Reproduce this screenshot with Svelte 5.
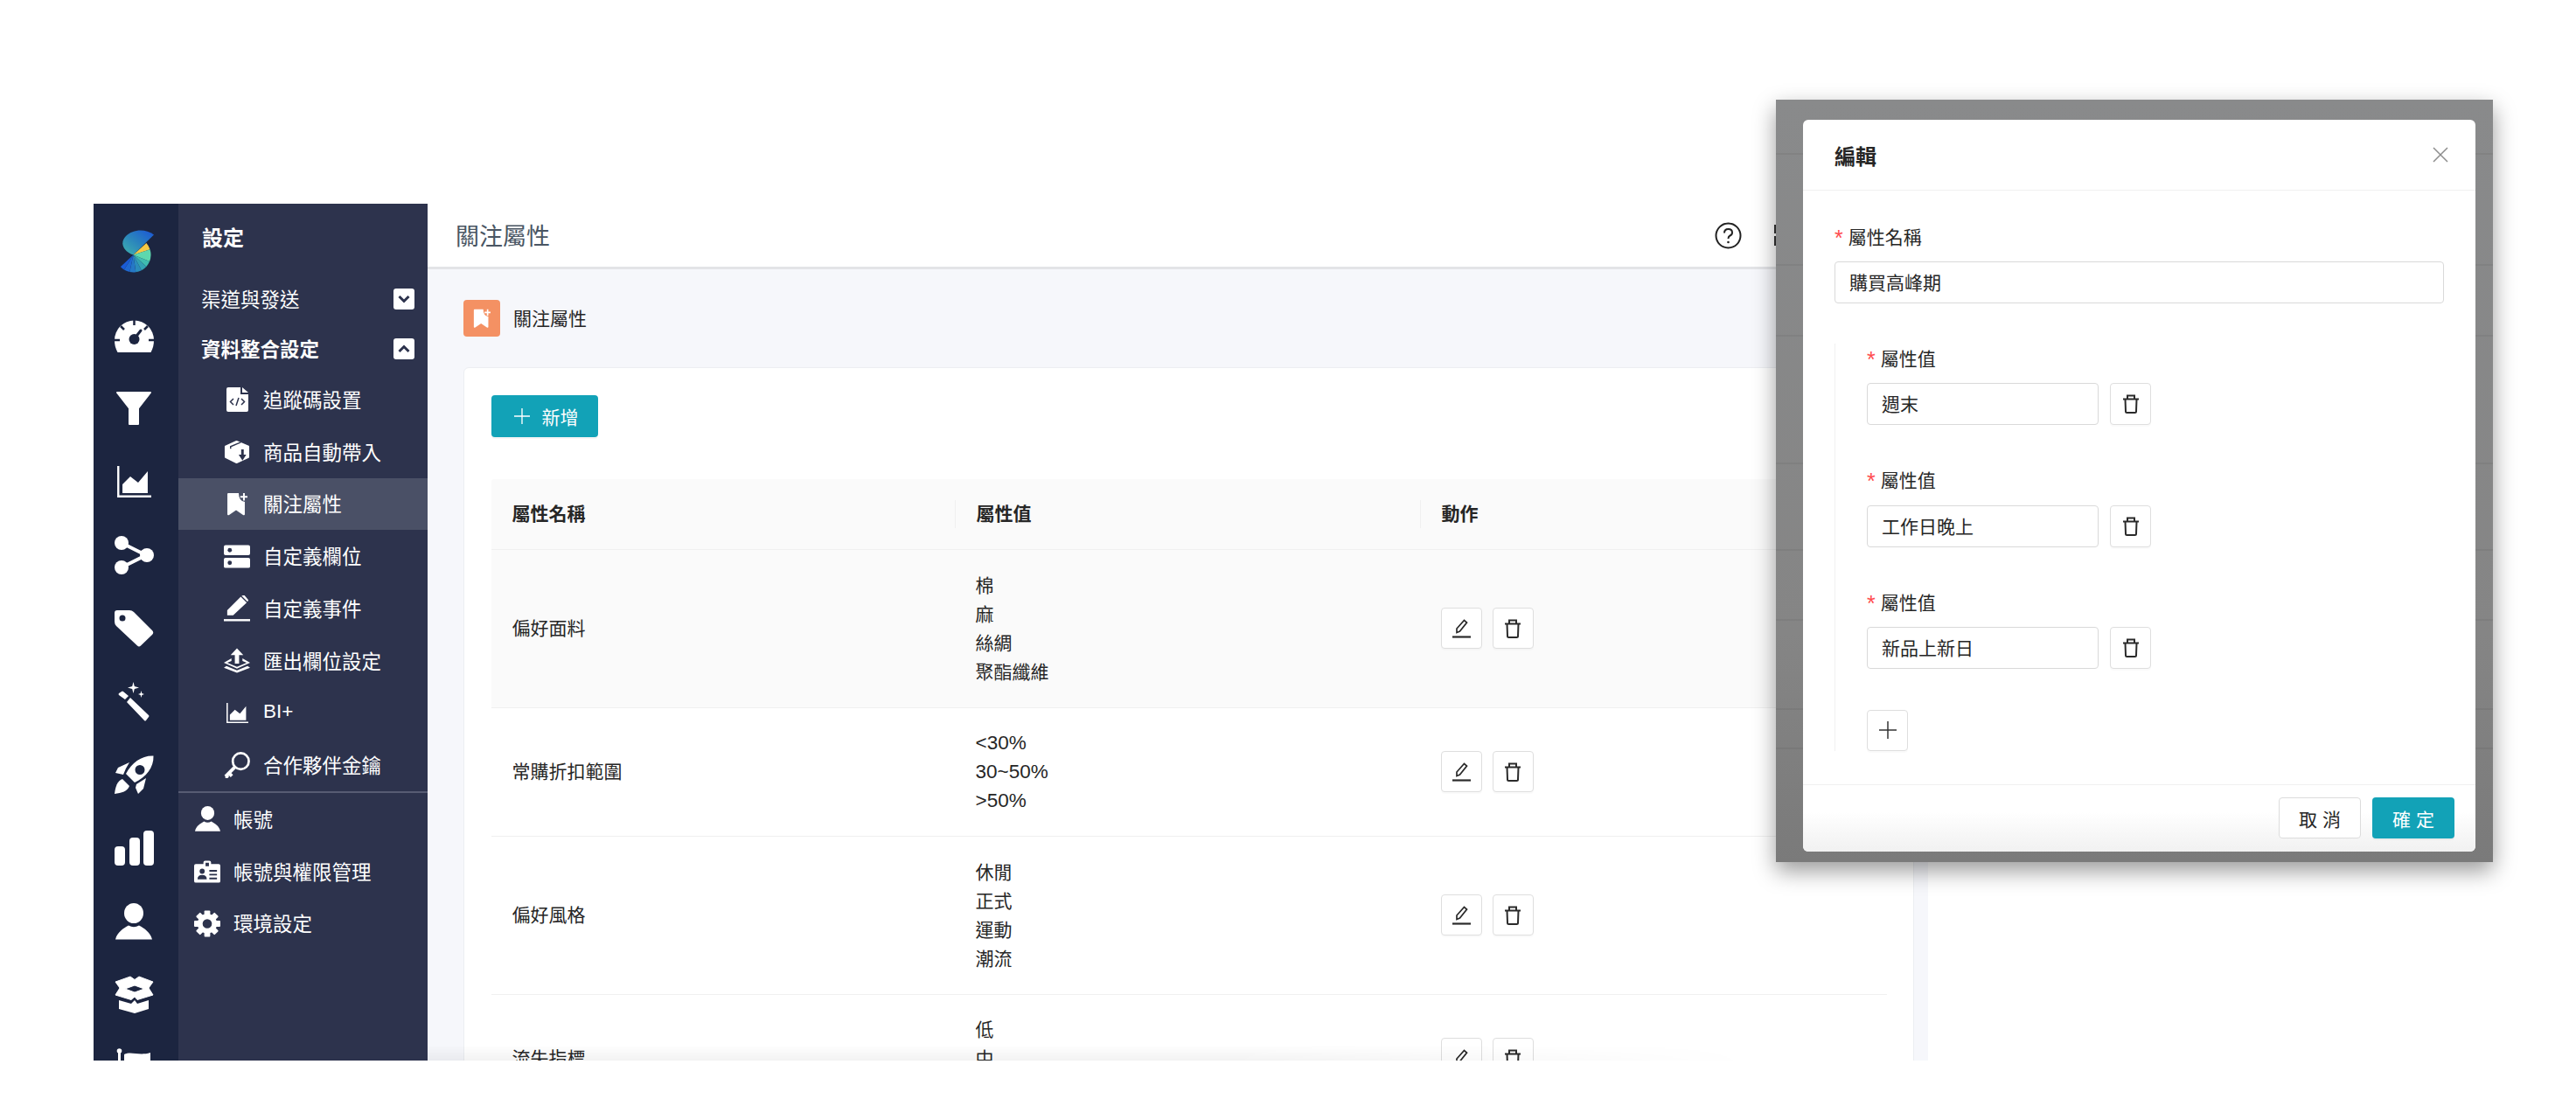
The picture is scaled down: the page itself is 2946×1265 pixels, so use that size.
<script>
  // fan wedges of the logo, angles in degrees around the fan centre
  const fan = [
    { from: -42, to: -18, color: '#f6c945' },
    { from: -18, to: 22, color: '#5dd8ae' },
    { from: 22, to: 42, color: '#3fbcb0' },
    { from: 42, to: 62, color: '#33a2b4' },
    { from: 62, to: 82, color: '#2b8cbc' },
    { from: 82, to: 102, color: '#2578c6' },
    { from: 102, to: 122, color: '#1f68d0' },
    { from: 122, to: 137, color: '#1a5bd6' }
  ];

  function wedge(w) {
    const r = 20;
    const a = (w.from * Math.PI) / 180;
    const b = (w.to * Math.PI) / 180;
    const p = (t) => `${(14.5 + r * Math.cos(t)).toFixed(2)} ${(28.5 + r * Math.sin(t)).toFixed(2)}`;
    return `M14.5 28.5L${p(a)}A${r} ${r} 0 0 1 ${p(b)}Z`;
  }

  const gearTeeth = [0, 45, 90, 135, 180, 225, 270, 315];

  const railIcons = [gauge, funnel, areaChart, share, tag, wand, rocket, bars, person, openBox, flag];

  const subItems = [
    { label: '追蹤碼設置', icon: codeFile },
    { label: '商品自動帶入', icon: boxImport },
    { label: '關注屬性', icon: bookmarkPlus, active: true },
    { label: '自定義欄位', icon: server },
    { label: '自定義事件', icon: pencil },
    { label: '匯出欄位設定', icon: exportLayers },
    { label: 'BI+', icon: areaChart },
    { label: '合作夥伴金鑰', icon: key }
  ];

  const topItems = [
    { label: '帳號', icon: person },
    { label: '帳號與權限管理', icon: idCard },
    { label: '環境設定', icon: gear }
  ];

  const rows = [
    { name: '偏好面料', values: ['棉', '麻', '絲綢', '聚酯纖維'], hover: true },
    { name: '常購折扣範圍', values: ['<30%', '30~50%', '>50%'], latin: true },
    { name: '偏好風格', values: ['休閒', '正式', '運動', '潮流'] },
    { name: '流失指標', values: ['低', '中', '高'] }
  ];

  const modalValues = ['週末', '工作日晚上', '新品上新日'];

  // rows of the page behind the dimmed layer, y inside the layer
  const dimLines = [61, 188, 269, 415, 514, 594, 696, 741];
</script>

{#snippet gauge()}
  <svg class="gauge" width="45" height="37" viewBox="0 0 45 37">
    <path fill="#fff" d="M3.500 37C1 32.500 0 28 0 23A22.500 22.500 0 0 1 45 23C45 28 44 32.500 41.500 37Z" />
    <path stroke="#1c2540" stroke-width="2.500" d="M22.500 0V6M7 7L11 11M38 7L34 11M0 23H6M39 23H45" />
    <circle cx="22.500" cy="22" r="6" fill="#1c2540" />
    <path stroke="#1c2540" stroke-width="3" stroke-linecap="round" d="M23 21L30 12" />
  </svg>
{/snippet}

{#snippet funnel()}
  <svg width="40" height="38" viewBox="0 0 40 38">
    <path fill="#fff" stroke="#fff" stroke-width="2" stroke-linejoin="round" d="M1 1H39L25 19V37H15V19Z" />
  </svg>
{/snippet}

{#snippet areaChart(size = 39)}
  <svg width={size} height={size * 0.92} viewBox="0 0 39 36">
    <path fill="none" stroke="#fff" stroke-width="2.400" d="M1.200 0V34.800H39" />
    <path fill="#fff" d="M6 31V21L15 12L24 19L35 6V31Z" />
  </svg>
{/snippet}

{#snippet share()}
  <svg width="45" height="44" viewBox="0 0 45 44">
    <path stroke="#fff" stroke-width="4" d="M8 8L36 22L8 36" fill="none" />
    <circle cx="8" cy="8" r="8" fill="#fff" />
    <circle cx="37" cy="22" r="8" fill="#fff" />
    <circle cx="8" cy="36" r="8" fill="#fff" />
  </svg>
{/snippet}

{#snippet tag()}
  <svg width="45" height="42" viewBox="0 0 45 42">
    <path fill="#fff" fill-rule="evenodd" d="M3 0H17Q20 0 22 2L43 23Q45.500 25.500 43 28L30 40.500Q28 42.500 26 40.500L2 18Q0 16 0 13V3Q0 0 3 0ZM9 5.500A3.500 3.500 0 1 0 9 12.500A3.500 3.500 0 1 0 9 5.500Z" />
  </svg>
{/snippet}

{#snippet wand()}
  <svg width="36" height="45" viewBox="0 0 36 45">
    <path fill="#fff" d="M6 11L12 16L8 20L1 15Q0 14 1 13L4 11Q5 10 6 11Z" />
    <path fill="#fff" d="M14 18L35 38Q36 39 35 40L32 44Q31 45 30 44L10 23Z" />
    <path fill="#fff" d="M17.500 0L18.800 5L24 6.500L18.800 8L17.500 13L16.200 8L11 6.500L16.200 5Z" />
    <path fill="#fff" d="M26.500 10L27.300 13L30 14L27.300 15L26.500 18L25.700 15L23 14L25.700 13Z" />
  </svg>
{/snippet}

{#snippet rocket()}
  <svg width="45" height="44" viewBox="0 0 45 44">
    <path fill="#fff" fill-rule="evenodd" d="M44.500 0.500C31 0 20 8 13 21L23 31C36 25 45 14 44.500 0.500ZM29 11A5.500 5.500 0 1 0 29 22A5.500 5.500 0 1 0 29 11Z" />
    <path fill="#fff" d="M16 8L3 14L0 20L9 22Q12 14 16 8Z" transform="translate(1 0)" />
    <path fill="#fff" d="M36 26L25 33L24 37L27 44L33 38Z" />
    <path fill="#fff" d="M9 27C3 29 1 36 0 44C8 43 15 41 17 35Z" />
  </svg>
{/snippet}

{#snippet bars()}
  <svg width="45" height="40" viewBox="0 0 45 40">
    <rect x="0" y="18" width="12" height="22" rx="4" fill="#fff" />
    <rect x="17" y="8" width="12" height="32" rx="4" fill="#fff" />
    <rect x="33" y="0" width="12" height="40" rx="4" fill="#fff" />
  </svg>
{/snippet}

{#snippet person(size = 42)}
  <svg width={size} height={size} viewBox="0 0 42 42">
    <ellipse cx="21" cy="11.500" rx="11" ry="11.500" fill="#fff" />
    <path fill="#fff" d="M0 41.500C2 33 9 29 15 25.500Q21 29 27 25.500C33 29 40 33 42 41.500Z" />
  </svg>
{/snippet}

{#snippet openBox()}
  <svg width="45" height="43" viewBox="0 0 45 43">
    <path fill="#fff" stroke="#fff" stroke-linejoin="round" fill-rule="evenodd" d="M1 7L18 1L23 4.500L28 1L44 7L39 14L44 22L26 27.500L23 24L19 27.500L1 22L6 14ZM12 15L23 19L34 15L23 11Z" />
    <path fill="#fff" d="M5 28L19 32L23 28L26 32L39 28V38L23 43L5 38Z" />
  </svg>
{/snippet}

{#snippet flag()}
  <svg width="40" height="46" viewBox="0 0 40 46">
    <circle cx="3.500" cy="3" r="2.800" fill="#fff" />
    <rect x="2" y="3" width="3" height="43" fill="#fff" />
    <path fill="#fff" d="M9 7C17 3 26 9 39 5V36H9Z" />
  </svg>
{/snippet}

{#snippet codeFile()}
  <svg width="25" height="28" viewBox="0 0 25 28">
    <path fill="#fff" d="M2 0H16V8H25V26Q25 28 23 28H2Q0 28 0 26V2Q0 0 2 0ZM18 0L25 6H18Z" />
    <path fill="none" stroke="#2d334d" stroke-width="1.500" d="M8 13L4.500 16.500L8 20M17 13L20.500 16.500L17 20M14 12L11 21" />
  </svg>
{/snippet}

{#snippet boxImport()}
  <svg width="31" height="28" viewBox="0 0 31 28">
    <path fill="#fff" stroke="#fff" stroke-width="2" stroke-linejoin="round" d="M2 7.500L15 1.500L29 7.500V20L15 26.500L2 20Z" />
    <path fill="none" stroke="#2d334d" stroke-width="1.500" d="M8 10V7.500L20 2.500" />
    <path fill="#2d334d" d="M20.500 11H23.500V17H26.500L22 24L17.500 17H20.500Z" />
  </svg>
{/snippet}

{#snippet bookmarkPlus(size = 24, ink = '#fff')}
  <svg width={size} height={size * 1.12} viewBox="0 0 24 27">
    <path fill={ink} d="M2 1H14Q14 10 21 11V25Q21 27 19 26L11 20.500L3 26Q1 27 1 25V2Q1 1 2 1Z" />
    <path stroke={ink} stroke-width="2" d="M20 1V9.500M15.800 5.200H24" />
  </svg>
{/snippet}

{#snippet server()}
  <svg width="31" height="27" viewBox="0 0 31 27">
    <rect y="0" width="31" height="12" rx="2" fill="#fff" />
    <rect y="15" width="31" height="12" rx="2" fill="#fff" />
    <circle cx="7" cy="6" r="2.500" fill="#2d334d" />
    <circle cx="7" cy="21" r="2.500" fill="#2d334d" />
  </svg>
{/snippet}

{#snippet pencil()}
  <svg width="31" height="30" viewBox="0 0 31 30">
    <path fill="#fff" d="M4 23V17L20 1L27 8L11 23ZM21 0L24 -1L29 5L28 7Z" />
    <rect x="0" y="27.500" width="31" height="2.500" fill="#fff" />
  </svg>
{/snippet}

{#snippet exportLayers()}
  <svg width="31" height="29" viewBox="0 0 31 29">
    <path fill="#fff" d="M15.500 0L23 8H18V18H13V8H8Z" />
    <path fill="#fff" d="M9 12V15L4 17L15.500 22L27 17L22 15V12L31 17L15.500 24L0 17Z" />
    <path fill="#fff" d="M3 21L15.500 26L28 21L31 23L15.500 29L0 23Z" />
  </svg>
{/snippet}

{#snippet key()}
  <svg width="31" height="30" viewBox="0 0 31 30">
    <circle cx="20" cy="10.500" r="9.500" fill="none" stroke="#fff" stroke-width="2.800" />
    <path stroke="#fff" stroke-width="4" d="M13.500 17L2 28.500M6 24.500L9.500 28M2.500 28L5 30" fill="none" />
  </svg>
{/snippet}

{#snippet idCard()}
  <svg width="31" height="26" viewBox="0 0 31 26">
    <path fill="#fff" fill-rule="evenodd" d="M2 4H11V2Q11 0 13 0H18Q20 0 20 2V4H29Q31 4 31 6V24Q31 26 29 26H2Q0 26 0 24V6Q0 4 2 4ZM13.500 2.500V6.500H17.500V2.500Z" />
    <circle cx="9.500" cy="12.500" r="3" fill="#2d334d" />
    <path fill="#2d334d" d="M4 22Q4 17 9.500 17Q15 17 15 22Z" />
    <path stroke="#2d334d" stroke-width="2" d="M18 12H27M18 16.500H27M18 21H27" />
  </svg>
{/snippet}

{#snippet gear()}
  <svg width="31" height="31" viewBox="0 0 31 31">
    {#each gearTeeth as a}
      <rect x="12" y="0" width="7" height="8" rx="1" fill="#fff" transform="rotate({a} 15.500 15.500)" />
    {/each}
    <circle cx="15.500" cy="15.500" r="8.500" fill="none" stroke="#fff" stroke-width="6" />
  </svg>
{/snippet}

{#snippet trash()}
  <svg width="20" height="22" viewBox="0 0 20 22" fill="none" stroke="#2a2a2a" stroke-width="2">
    <path d="M1 5.500H19M6 5.500V1.500H14V5.500M3.500 5.500L4 19.500Q4 21 5.500 21H14.500Q16 21 16 19.500L16.500 5.500" />
  </svg>
{/snippet}

{#snippet edit()}
  <svg width="21" height="22" viewBox="0 0 21 22" fill="none" stroke="#2a2a2a" stroke-width="1.700">
    <path d="M5 15.500V11L13.500 1.500L16.500 4L8.500 14Z" />
    <path stroke-width="2.200" d="M0 20.500H21" />
  </svg>
{/snippet}

{#snippet plus(ink = '#333', size = 20)}
  <svg width={size} height={size} viewBox="0 0 20 20" stroke={ink} stroke-width="1.500">
    <path d="M10 0V20M0 10H20" />
  </svg>
{/snippet}

<div class="page">
  <div class="app">
    <nav class="rail">
      <div class="logo">
        <svg width="39" height="49" viewBox="0 0 39 49">
          <defs>
            <linearGradient id="logoTop" x1="0" y1="1" x2="1" y2="0">
              <stop offset="0" stop-color="#3fb3ad" />
              <stop offset="0.5" stop-color="#2a83bd" />
              <stop offset="1" stop-color="#1a55d8" />
            </linearGradient>
          </defs>
          <path fill="url(#logoTop)" d="M14.500 28.500C2 24 -1 14 6 7C14 -1 28 -2 38 5.500Z" />
          {#each fan as w}
            <path d={wedge(w)} fill={w.color} />
          {/each}
        </svg>
      </div>
      {#each railIcons as icon}
        <div class="rail-item">{@render icon()}</div>
      {/each}
    </nav>

    <aside class="menu">
      <div class="menu-title">設定</div>
      <div class="group-row">
        <span>渠道與發送</span>
        <span class="toggle">
          <svg width="14" height="10" viewBox="0 0 14 10" fill="none" stroke="#2d334d" stroke-width="3"><path d="M1.500 2L7 7.500L12.500 2" /></svg>
        </span>
      </div>
      <div class="group-row open">
        <span>資料整合設定</span>
        <span class="toggle">
          <svg width="14" height="10" viewBox="0 0 14 10" fill="none" stroke="#2d334d" stroke-width="3"><path d="M1.500 8L7 2.500L12.500 8" /></svg>
        </span>
      </div>
      {#each subItems as item}
        <div class="sub-item" class:active={item.active}>
          <span class="menu-icon">
            {#if item.label === 'BI+'}
              {@render item.icon(25)}
            {:else}
              {@render item.icon()}
            {/if}
          </span>
          <span class="menu-label">{item.label}</span>
        </div>
      {/each}
      <div class="top-items">
        {#each topItems as item}
          <div class="top-item">
            <span class="menu-icon">
              {#if item.label === '帳號'}
                {@render item.icon(29)}
              {:else}
                {@render item.icon()}
              {/if}
            </span>
            <span class="menu-label">{item.label}</span>
          </div>
        {/each}
      </div>
    </aside>

    <main class="main">
      <header class="topbar">
        <h1>關注屬性</h1>
        <div class="topbar-tools">
          <svg width="31" height="31" viewBox="0 0 31 31" fill="none" stroke="#222" stroke-width="2">
            <circle cx="15.500" cy="15.500" r="14" />
            <path d="M11 12.500Q11 8 15.500 8Q20 8 20 12Q20 14.500 17.500 15.500Q15.500 16.500 15.500 19" />
            <circle cx="15.500" cy="23" r="1.300" fill="#222" stroke="none" />
          </svg>
          <svg width="30" height="30" viewBox="0 0 30 30" fill="#333">
            <rect x="0" y="3" width="2" height="10" />
            <rect x="0" y="16" width="2" height="11" />
          </svg>
        </div>
      </header>

      <div class="content">
        <div class="section-title">
          <span class="section-icon">{@render bookmarkPlus(20)}</span>
          <span class="section-label">關注屬性</span>
        </div>

        <section class="card">
          <button class="primary add">
            {@render plus('#fff', 18)}
            <span>新增</span>
          </button>

          <div class="table">
            <div class="tr head">
              <div class="th">屬性名稱</div>
              <div class="th">屬性值</div>
              <div class="th">動作</div>
            </div>
            {#each rows as row}
              <div class="tr" class:hover={row.hover}>
                <div class="td">{row.name}</div>
                <div class="td" class:latin={row.latin}>
                  {#each row.values as value}
                    <div>{value}</div>
                  {/each}
                </div>
                <div class="td actions">
                  <button class="icon-btn">{@render edit()}</button>
                  <button class="icon-btn">{@render trash()}</button>
                </div>
              </div>
            {/each}
          </div>
        </section>
      </div>
    </main>
  </div>

  <div class="dim">
    {#each dimLines as y}
      <i class="dim-line" style="top: {y}px"></i>
    {/each}
    <span class="dim-peek">關注</span>

    <div class="modal">
      <div class="modal-head">
        <span>編輯</span>
        <svg width="18" height="18" viewBox="0 0 18 18" stroke="#8c8c8c" stroke-width="1.500"><path d="M1 1L17 17M17 1L1 17" /></svg>
      </div>

      <div class="modal-body">
        <label class="field-label" for="attr-name"><em>*</em><span>屬性名稱</span></label>
        <input id="attr-name" class="text-input" value="購買高峰期" />

        <div class="value-list">
          {#each modalValues as value, i}
            <div class="value-item">
              <label class="field-label" for="attr-value-{i}"><em>*</em><span>屬性值</span></label>
              <div class="value-row">
                <input id="attr-value-{i}" class="text-input short" {value} />
                <button class="icon-btn">{@render trash()}</button>
              </div>
            </div>
          {/each}
          <button class="icon-btn">{@render plus()}</button>
        </div>
      </div>

      <div class="modal-foot">
        <button class="cancel">取消</button>
        <button class="primary ok">確定</button>
      </div>
    </div>
  </div>
</div>

<style>
  :global(body) {
    margin: 0;
    background: #fff;
  }

  .page {
    position: relative;
    width: 2946px;
    height: 1265px;
    overflow: hidden;
    padding: 233px 0 0 107px;
    box-sizing: border-box;
    font-family: 'Liberation Sans', 'Noto Sans CJK TC', sans-serif;
    font-size: 21px;
    color: #262626;
  }

  .app {
    display: flex;
    width: 2098px;
    height: 980px;
    overflow: hidden;
  }

  /* icon rail */
  .rail {
    flex: 0 0 97px;
    background: #1c2540;
  }

  .logo {
    height: 108px;
    box-sizing: border-box;
    padding: 30px 0 0 31px;
  }

  .rail-item {
    height: 83.9px;
    padding-right: 5px;
    display: flex;
    align-items: center;
    justify-content: center;
  }

  .gauge {
    margin-top: 3px;
  }

  /* text menu */
  .menu {
    flex: 0 0 285px;
    background: #2d334d;
    color: #fff;
    font-size: 22.5px;
  }

  .menu-title {
    height: 80px;
    line-height: 80px;
    padding-left: 27px;
    font-size: 24px;
    font-weight: 700;
  }

  .group-row {
    height: 57px;
    box-sizing: border-box;
    display: flex;
    align-items: center;
    justify-content: space-between;
    padding: 0 15px 0 26px;
  }

  .group-row > span:first-child,
  .menu-label {
    position: relative;
    top: -1px;
  }

  .group-row.open {
    font-weight: 700;
  }

  .toggle {
    width: 24px;
    height: 24px;
    border-radius: 3px;
    background: #fff;
    display: flex;
    align-items: center;
    justify-content: center;
  }

  .sub-item,
  .top-item {
    height: 59.75px;
    display: flex;
    align-items: center;
    gap: 15px;
  }

  .sub-item {
    padding-left: 52px;
  }

  .sub-item.active {
    background: #4a5066;
  }

  .top-item {
    padding-left: 18px;
  }

  .top-items {
    border-top: 2px solid #575c73;
  }

  .menu-icon {
    width: 30px;
    display: flex;
    justify-content: center;
  }

  /* page */
  .main {
    position: relative;
    flex: 1;
    min-width: 0;
    background: #f6f7fb;
  }

  .main::after {
    content: '';
    position: absolute;
    left: 0;
    right: 200px;
    bottom: 0;
    height: 18px;
    background: linear-gradient(rgba(0, 0, 0, 0), rgba(0, 0, 0, 0.05));
    -webkit-mask-image: linear-gradient(90deg, #000 60%, transparent);
    mask-image: linear-gradient(90deg, #000 60%, transparent);
  }

  .topbar {
    height: 75px;
    box-sizing: border-box;
    background: #fff;
    border-bottom: 3px solid #e3e4e7;
    display: flex;
    align-items: center;
    justify-content: space-between;
    padding: 0 146px 0 32px;
  }

  .topbar h1 {
    margin: 0 0 2px;
    font-size: 27px;
    font-weight: 400;
    color: #4a5663;
  }

  .topbar-tools {
    display: flex;
    align-items: center;
    gap: 37px;
  }

  .content {
    padding: 35px 16px 0 41px;
  }

  .section-title {
    display: flex;
    align-items: center;
    gap: 15px;
    height: 42px;
    margin-bottom: 35px;
  }

  .section-label {
    margin-bottom: 2px;
  }

  .section-icon {
    width: 42px;
    height: 42px;
    border-radius: 4px;
    background: #f49163;
    display: flex;
    align-items: center;
    justify-content: center;
  }

  .card {
    background: #fff;
    border: 1.5px solid #eceef2;
    border-radius: 6px;
    padding: 31px 30.5px 0;
  }

  button {
    font: inherit;
    margin: 0;
    cursor: pointer;
  }

  .primary {
    border: none;
    border-radius: 4px;
    background: #12a2b7;
    color: #fff;
    box-shadow: 0 2px 0 rgba(0, 0, 0, 0.04);
  }

  .add {
    display: flex;
    align-items: center;
    gap: 14px;
    width: 122px;
    height: 48px;
    padding: 0 0 0 26px;
    box-sizing: border-box;
  }

  .table {
    margin-top: 48px;
  }

  .tr {
    display: grid;
    grid-template-columns: 530px 532px 1fr;
    border-bottom: 1.5px solid #f0f0f0;
  }

  .tr.hover {
    background: #fafafa;
  }

  .tr.head {
    background: #fafafa;
    font-weight: 700;
    border-radius: 3px 3px 0 0;
    height: 81px;
    box-sizing: border-box;
    align-items: center;
  }

  .th {
    padding-left: 24px;
    height: 32px;
    line-height: 32px;
    border-left: 1.5px solid #f0f0f0;
  }

  .th:first-child {
    border-left: none;
  }

  .td {
    padding: 23.75px 24px;
    line-height: 33px;
    align-self: center;
  }

  .td.latin {
    font-size: 22.5px;
  }

  .actions {
    display: flex;
    gap: 12px;
  }

  .icon-btn {
    width: 47px;
    height: 47px;
    padding: 0;
    border: 1.5px solid #dedede;
    border-radius: 4px;
    background: #fff;
    display: flex;
    align-items: center;
    justify-content: center;
    box-shadow: 0 2px 0 rgba(0, 0, 0, 0.02);
  }

  /* dimmed capture with the dialog */
  .dim {
    position: absolute;
    left: 2031px;
    top: 114px;
    width: 820px;
    height: 872px;
    background: linear-gradient(#898a8b, #858585 70%, #7a7a7a);
    box-shadow: 0 10px 24px rgba(0, 0, 0, 0.4);
  }

  .dim-line {
    position: absolute;
    left: 0;
    right: 0;
    height: 2px;
    background: rgba(0, 0, 0, 0.05);
  }

  .dim-peek {
    position: absolute;
    left: 367px;
    top: 869px;
    width: 42px;
    height: 3px;
    overflow: hidden;
    line-height: 30px;
    color: #111;
  }

  .modal {
    position: absolute;
    left: 31px;
    top: 23px;
    width: 769px;
    background: #fff;
    border-radius: 6px;
    overflow: hidden;
  }

  .modal-head {
    height: 81px;
    box-sizing: border-box;
    border-bottom: 1.5px solid #f0f0f0;
    display: flex;
    align-items: center;
    justify-content: space-between;
    padding: 0 31px 0 36px;
    font-size: 24px;
    font-weight: 700;
  }

  .modal-body {
    padding: 36px 36px 38px;
  }

  .field-label {
    display: flex;
    align-items: center;
    height: 33px;
    margin-bottom: 12px;
  }

  .field-label span {
    margin-bottom: 2px;
  }

  .field-label em {
    font-style: normal;
    font-size: 25px;
    line-height: 33px;
    padding-top: 3px;
    color: #ff4d4f;
    margin-right: 6px;
  }

  .text-input {
    display: block;
    width: 100%;
    height: 48px;
    box-sizing: border-box;
    padding: 0 16px 2px;
    border: 1.5px solid #d9d9d9;
    border-radius: 4px;
    background: #fff;
    color: #262626;
    font: inherit;
    outline: none;
  }

  .text-input.short {
    width: 265px;
  }

  .value-list {
    margin-top: 46px;
    padding-left: 36px;
    border-left: 1.5px solid #f0f0f0;
  }

  .value-item {
    margin-bottom: 46.5px;
  }

  .value-row {
    display: flex;
    align-items: center;
    gap: 13px;
  }

  .value-row .icon-btn {
    height: 48px;
  }

  .modal-foot {
    height: 77px;
    box-sizing: border-box;
    border-top: 1.5px solid #f0f0f0;
    display: flex;
    align-items: center;
    justify-content: flex-end;
    gap: 13px;
    padding-right: 24px;
    background: linear-gradient(#fff 40%, #f1f1f1);
  }

  .modal-foot button {
    width: 94px;
    height: 47px;
    padding: 0;
    letter-spacing: 6px;
    text-indent: 6px;
  }

  .cancel {
    background: #fff;
    color: #262626;
    border: 1.5px solid #dcdcdc;
    border-radius: 4px;
  }
</style>
